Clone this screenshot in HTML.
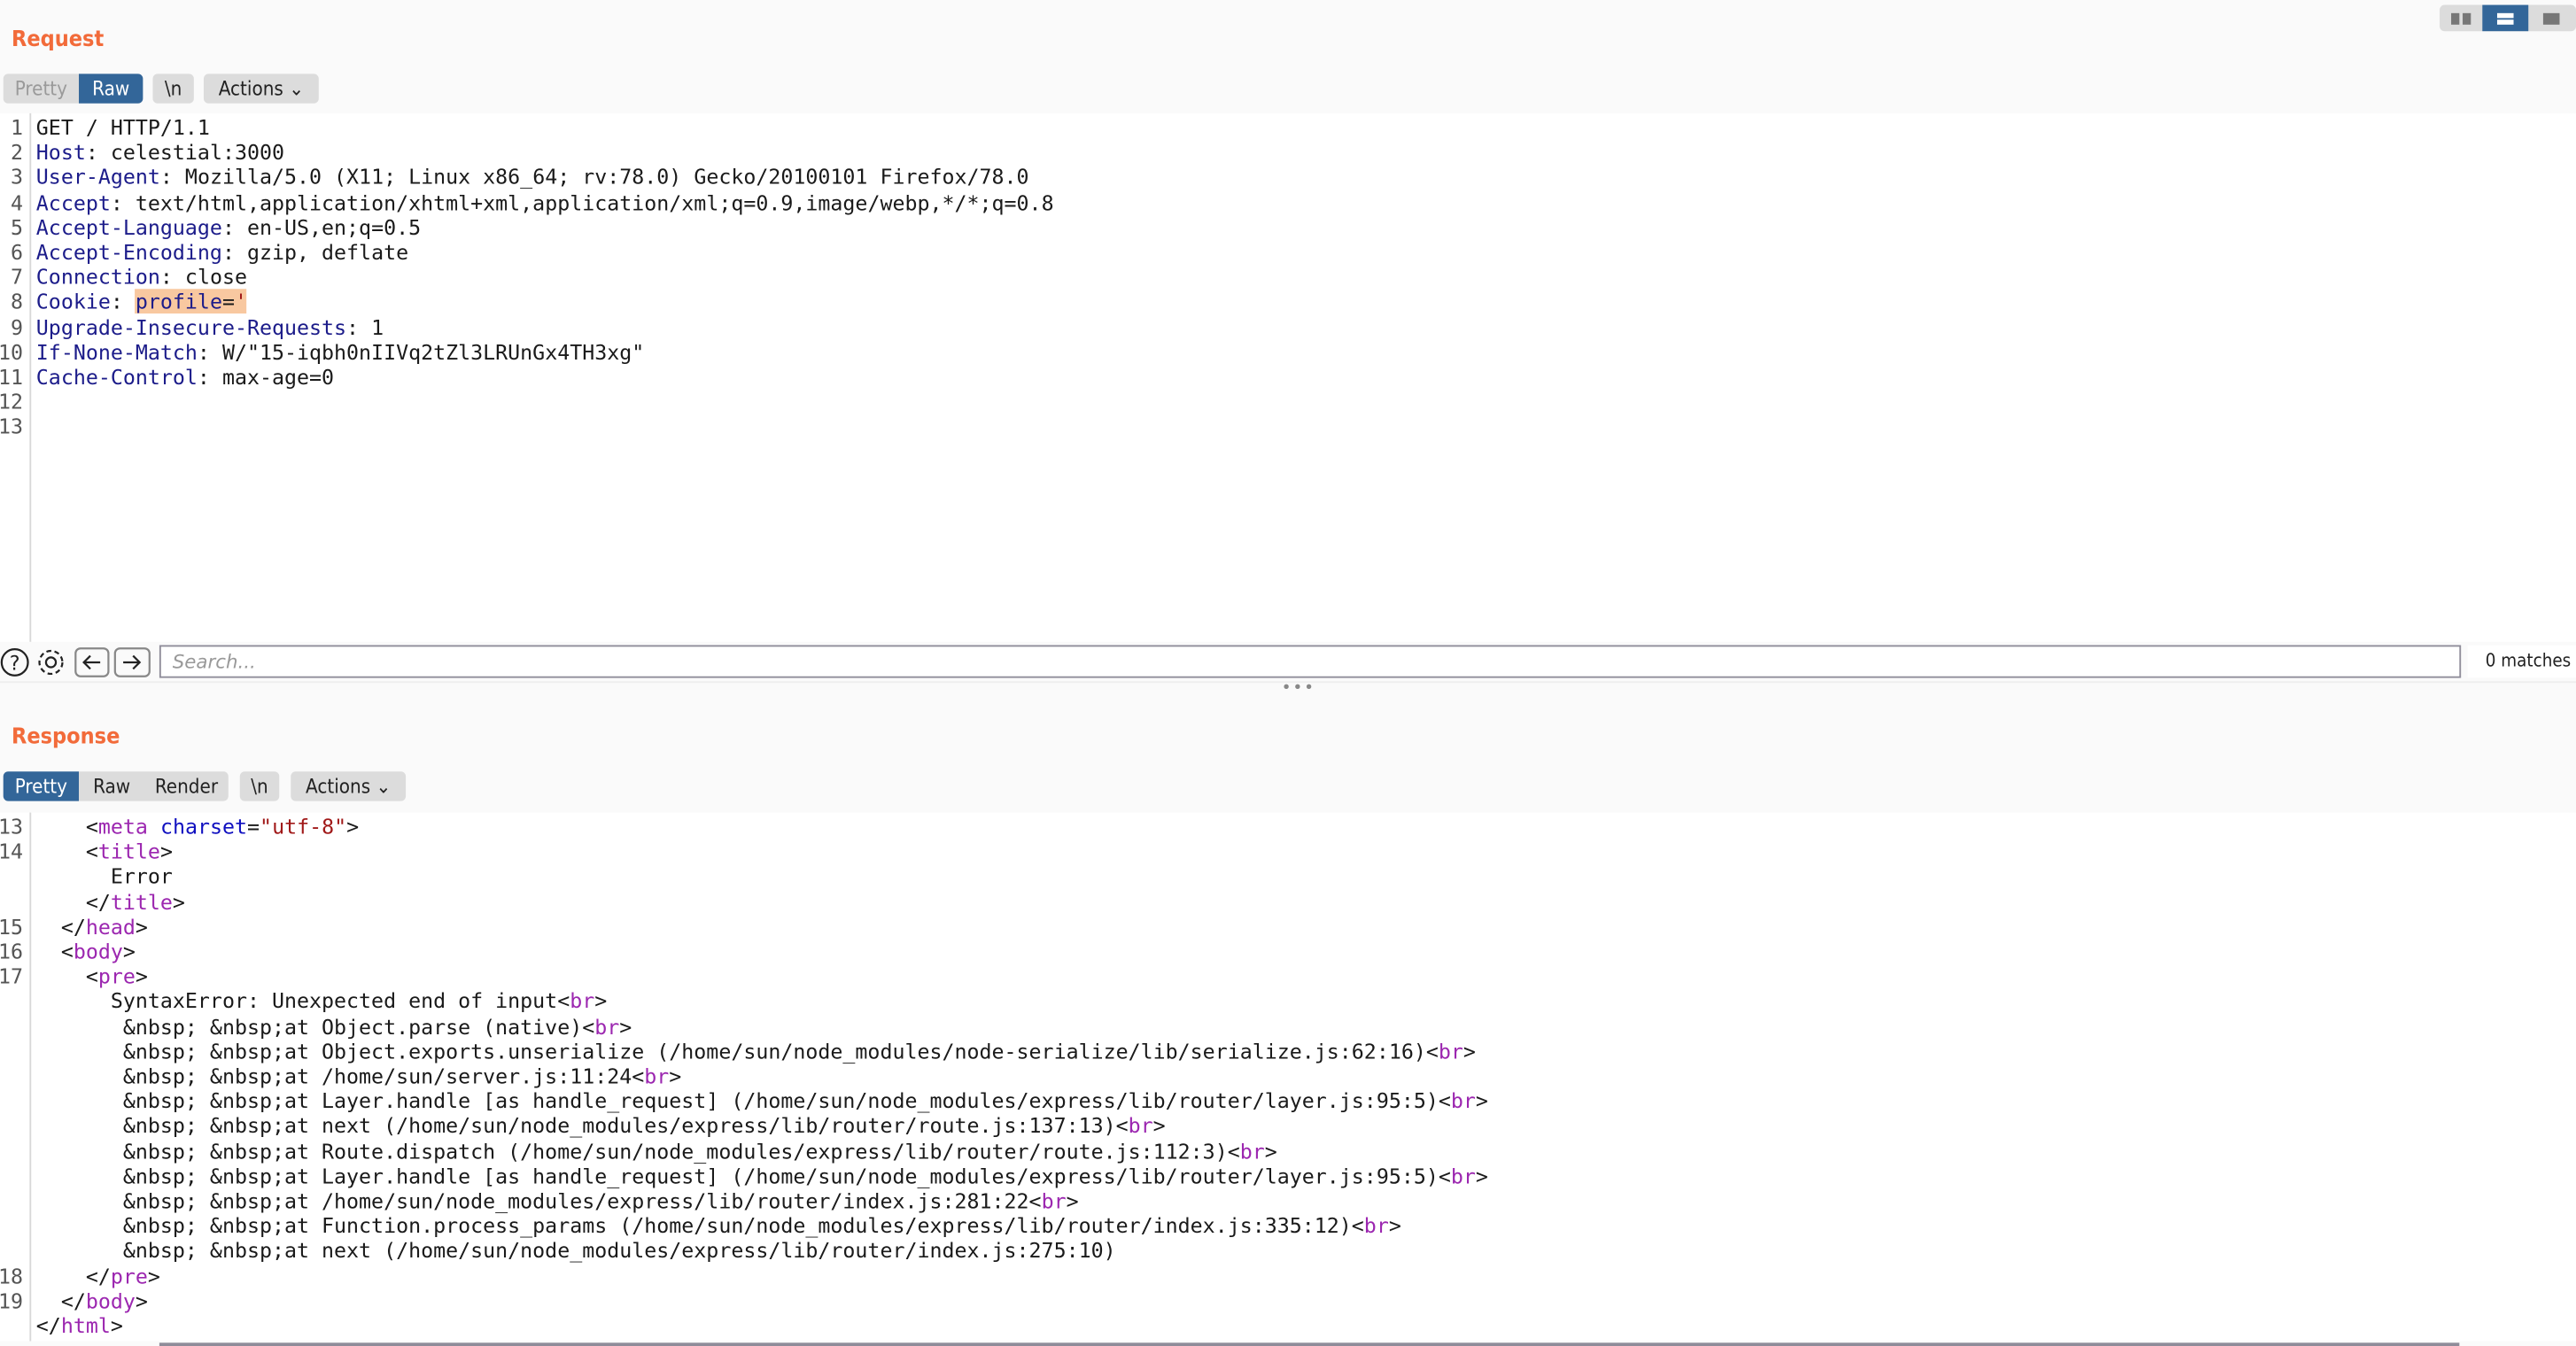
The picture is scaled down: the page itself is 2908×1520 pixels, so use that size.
<!DOCTYPE html>
<html><head><meta charset="utf-8"><style>
html,body{margin:0;padding:0;width:2908px;height:1520px;overflow:hidden;background:#fafafa}
#w{position:absolute;left:0;top:0;width:1568px;height:820px;transform:scale(1.8546,1.8537);transform-origin:0 0;font-family:"DejaVu Sans","Liberation Sans",sans-serif;background:#fafafa}
.abs{position:absolute}
.title{color:#f26b3a;font-weight:bold;font-size:13.5px;font-family:"DejaVu Sans Condensed","DejaVu Sans",sans-serif}
.btn{position:absolute;height:18px;line-height:18px;font-size:12px;background:#dcdcdc;color:#222;text-align:center;font-family:"DejaVu Sans Condensed","DejaVu Sans",sans-serif}
.sel{background:#336699;color:#fff}
.ed{position:absolute;left:0;right:0;background:#fff}
.gut{position:absolute;left:18px;top:0;bottom:0;border-left:1px solid #d8d8d8}
pre{margin:0;position:absolute;left:0;font-family:"DejaVu Sans Mono","Liberation Mono",monospace;font-size:12.55px;line-height:15.2px;color:#1a1a1a}
.ln{color:#555;width:16px;text-align:right;left:-2px}
.k{color:#1c1c8a}.t{color:#9c27b0}.a{color:#1010c0}.v{color:#a01818}.g{color:#333}
.hl{background:#f8c8a0}
</style></head><body><div id="w">
<div class="abs title" style="left:7px;top:16px">Request</div>
<div class="btn" style="left:2px;top:45px;width:46px;border-radius:3px 0 0 3px;color:#9a9a9a">Pretty</div>
<div class="btn sel" style="left:48px;top:45px;width:39px;border-radius:0 3px 3px 0">Raw</div>
<div class="btn" style="left:93px;top:45px;width:25px;border-radius:3px">\n</div>
<div class="btn" style="left:124px;top:45px;width:70px;border-radius:3px">Actions &#8964;</div>
<div class="abs" style="left:1485px;top:3px;width:83px;height:16px;background:#dcdcdc;border-radius:3px"></div>
<div class="abs" style="left:1492px;top:8px;width:5px;height:7px;background:#777"></div>
<div class="abs" style="left:1499px;top:8px;width:5px;height:7px;background:#777"></div>
<div class="abs" style="left:1511px;top:3px;width:28px;height:16px;background:#336699"></div>
<div class="abs" style="left:1520px;top:8px;width:10px;height:3px;background:#fff"></div>
<div class="abs" style="left:1520px;top:12px;width:10px;height:3px;background:#fff"></div>
<div class="abs" style="left:1548px;top:8px;width:10px;height:7px;background:#777"></div>

<div class="ed" style="top:69px;height:322px"><div class="gut"></div>
<pre class="ln" style="top:1px">1
2
3
4
5
6
7
8
9
10
11
12
13</pre>
<pre style="left:22px;top:1px">GET / HTTP/1.1
<span class="k">Host</span>: celestial:3000
<span class="k">User-Agent</span>: Mozilla/5.0 (X11; Linux x86_64; rv:78.0) Gecko/20100101 Firefox/78.0
<span class="k">Accept</span>: text/html,application/xhtml+xml,application/xml;q=0.9,image/webp,*/*;q=0.8
<span class="k">Accept-Language</span>: en-US,en;q=0.5
<span class="k">Accept-Encoding</span>: gzip, deflate
<span class="k">Connection</span>: close
<span class="k">Cookie</span>: <span class="hl"><span class="k">profile</span>=<span class="v">'</span></span>
<span class="k">Upgrade-Insecure-Requests</span>: 1
<span class="k">If-None-Match</span>: W/"15-iqbh0nIIVq2tZl3LRUnGx4TH3xg"
<span class="k">Cache-Control</span>: max-age=0
</pre></div>

<div class="abs" style="left:0;top:392px;width:1568px;height:22px;background:#fafafa"></div>
<svg class="abs" style="left:0;top:394px" width="95" height="19" viewBox="0 0 95 19" fill="none" stroke="#222" stroke-width="1.2">
<circle cx="9" cy="9.5" r="8"/><text x="9" y="14" font-size="12" text-anchor="middle" fill="#222" stroke="none" font-family="DejaVu Sans">?</text>
<circle cx="31" cy="9.5" r="3"/><circle cx="31" cy="9.5" r="7" stroke-dasharray="3 2"/>
<rect x="46" y="1" width="20" height="17" rx="3" stroke="#888"/><path d="M61 9.5H51M55 5.5l-4 4 4 4"/>
<rect x="70" y="1" width="21" height="17" rx="3" stroke="#888"/><path d="M75 9.5h10M81 5.5l4 4-4 4"/>
</svg>
<div class="abs" style="left:97px;top:393px;height:18px;border:1px solid #8e8c99;background:#fff;font-size:11.5px;line-height:18px;color:#999;font-style:italic;padding-left:7px;width:1392px">Search...</div>
<div class="abs" style="left:1502px;top:393px;width:66px;height:20px;background:#fff;font-size:11px;line-height:20px;color:#222;text-align:right;white-space:nowrap;font-family:'DejaVu Sans Condensed','DejaVu Sans',sans-serif">0 matches&nbsp;</div>
<div class="abs" style="left:0;top:415px;width:1568px;height:1px;background:#eee"></div>
<div class="abs" style="left:780px;top:414px;font-size:10px;color:#888;letter-spacing:1px">•••</div>

<div class="abs title" style="left:7px;top:441px">Response</div>
<div class="btn sel" style="left:2px;top:470px;width:46px;border-radius:3px 0 0 3px">Pretty</div>
<div class="btn" style="left:48px;top:470px;width:91px;border-radius:0 3px 3px 0"></div>
<div class="btn" style="left:48px;top:470px;width:40px;background:none">Raw</div>
<div class="btn" style="left:88px;top:470px;width:51px;background:none">Render</div>
<div class="btn" style="left:146px;top:470px;width:24px;border-radius:3px">\n</div>
<div class="btn" style="left:177px;top:470px;width:70px;border-radius:3px">Actions &#8964;</div>

<div class="ed" style="top:495px;height:322px"><div class="gut"></div>
<pre class="ln" style="top:1px">13
14


15
16
17











18
19</pre>
<pre style="left:22px;top:1px">    &lt;<span class="t">meta</span> <span class="a">charset</span>=<span class="v">"utf-8"</span>&gt;
    &lt;<span class="t">title</span>&gt;
      Error
    &lt;/<span class="t">title</span>&gt;
  &lt;/<span class="t">head</span>&gt;
  &lt;<span class="t">body</span>&gt;
    &lt;<span class="t">pre</span>&gt;
      SyntaxError: Unexpected end of input&lt;<span class="t">br</span>&gt;
       &amp;nbsp; &amp;nbsp;at Object.parse (native)&lt;<span class="t">br</span>&gt;
       &amp;nbsp; &amp;nbsp;at Object.exports.unserialize (/home/sun/node_modules/node-serialize/lib/serialize.js:62:16)&lt;<span class="t">br</span>&gt;
       &amp;nbsp; &amp;nbsp;at /home/sun/server.js:11:24&lt;<span class="t">br</span>&gt;
       &amp;nbsp; &amp;nbsp;at Layer.handle [as handle_request] (/home/sun/node_modules/express/lib/router/layer.js:95:5)&lt;<span class="t">br</span>&gt;
       &amp;nbsp; &amp;nbsp;at next (/home/sun/node_modules/express/lib/router/route.js:137:13)&lt;<span class="t">br</span>&gt;
       &amp;nbsp; &amp;nbsp;at Route.dispatch (/home/sun/node_modules/express/lib/router/route.js:112:3)&lt;<span class="t">br</span>&gt;
       &amp;nbsp; &amp;nbsp;at Layer.handle [as handle_request] (/home/sun/node_modules/express/lib/router/layer.js:95:5)&lt;<span class="t">br</span>&gt;
       &amp;nbsp; &amp;nbsp;at /home/sun/node_modules/express/lib/router/index.js:281:22&lt;<span class="t">br</span>&gt;
       &amp;nbsp; &amp;nbsp;at Function.process_params (/home/sun/node_modules/express/lib/router/index.js:335:12)&lt;<span class="t">br</span>&gt;
       &amp;nbsp; &amp;nbsp;at next (/home/sun/node_modules/express/lib/router/index.js:275:10)
    &lt;/<span class="t">pre</span>&gt;
  &lt;/<span class="t">body</span>&gt;
&lt;/<span class="t">html</span>&gt;</pre></div>
<div class="abs" style="left:97px;top:818px;width:1400px;height:2px;background:#8e8c99"></div>
</div></body></html>
